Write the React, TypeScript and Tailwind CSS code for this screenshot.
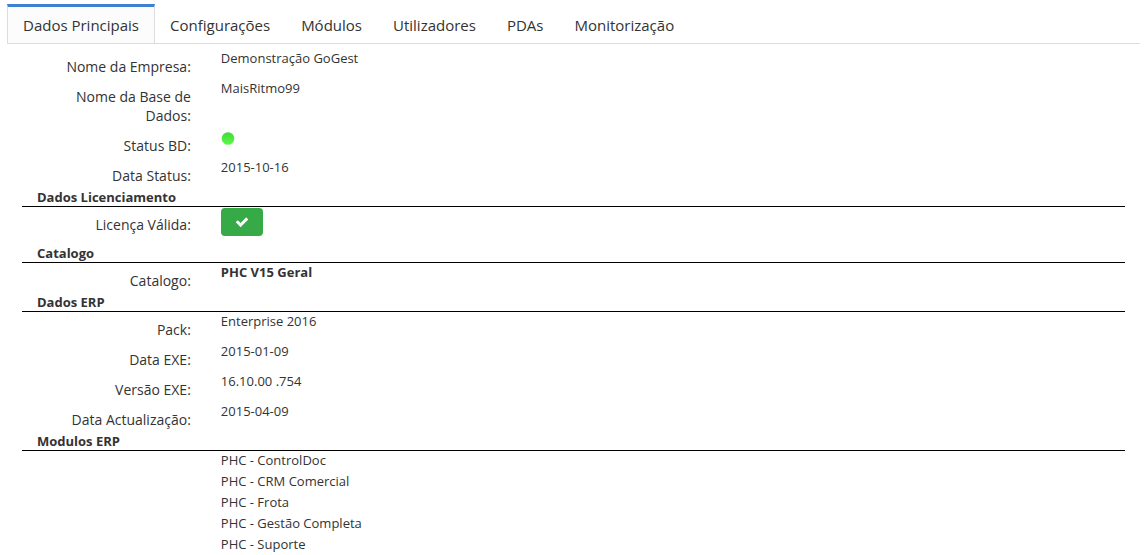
import type { ReactNode } from 'react';
import clsx from 'clsx';

const tabs = ['Dados Principais', 'Configurações', 'Módulos', 'Utilizadores', 'PDAs', 'Monitorização'];

const modulos = [
  'PHC - ControlDoc',
  'PHC - CRM Comercial',
  'PHC - Frota',
  'PHC - Gestão Completa',
  'PHC - Suporte',
];

const Row = ({ label, children }: { label: string; children: ReactNode }) => (
  <div className="grid grid-cols-6">
    <dt className="px-[15px] pt-2 pb-[3px] text-right text-sm leading-[19px]">{label}</dt>
    <dd className="col-span-5 px-[15px]">{children}</dd>
  </div>
);

const Section = ({ title, children }: { title: string; children: ReactNode }) => (
  <section>
    <h2 className="border-b border-black px-[15px] font-bold">{title}</h2>
    {children}
  </section>
);

const App = () => {
  return (
    <main className="bg-white pt-1 pr-1.5 pl-[7px] font-['Open_Sans',sans-serif] text-[13px] leading-[18px] text-[#333]">
      <nav className="flex -space-x-px border-b border-[#ddd]">
        {tabs.map((tab, index) => (
          <a
            key={tab}
            href="#"
            aria-current={index === 0 ? 'page' : undefined}
            className={clsx(
              'border-x border-t-3 px-[15px] py-2 text-[15px] leading-5',
              index === 0
                ? 'border-x-[#ddd] border-t-[#4080d0] bg-[#fcfcfc]'
                : 'border-transparent'
            )}
          >
            {tab}
          </a>
        ))}
      </nav>

      <div className="px-[15px] pt-[5px]">
        <dl>
          <Row label="Nome da Empresa:">Demonstração GoGest</Row>
          <Row label="Nome da Base de Dados:">MaisRitmo99</Row>
          <Row label="Status BD:">
            <svg className="mt-1" width="14" height="14" viewBox="0 0 14 14" role="img" aria-label="Online">
              <defs>
                <linearGradient id="status" x1="0" y1="0" x2="0" y2="1">
                  <stop offset="0" stopColor="#40d83a" />
                  <stop offset="1" stopColor="#5cfa44" />
                </linearGradient>
              </defs>
              <circle cx="7" cy="6.5" r="6.3" fill="url(#status)" />
            </svg>
          </Row>
          <Row label="Data Status:">2015-10-16</Row>
        </dl>

        <Section title="Dados Licenciamento">
          <dl className="pb-[7px]">
            <Row label="Licença Válida:">
              <button
                type="button"
                aria-label="Licença válida"
                className="mt-px flex h-7 w-[42px] items-center justify-center rounded bg-[#35aa47]"
              >
                <svg width="14" height="14" viewBox="0 0 1792 1792" fill="#fff">
                  <path d="M1671 566q0 40-28 68l-724 724-136 136q-28 28-68 28t-68-28l-136-136-362-362q-28-28-28-68t28-68l136-136q28-28 68-28t68 28l294 295 656-657q28-28 68-28t68 28l136 136q28 28 28 68z" />
                </svg>
              </button>
            </Row>
          </dl>
        </Section>

        <Section title="Catalogo">
          <dl>
            <Row label="Catalogo:">
              <b>PHC V15 Geral</b>
            </Row>
          </dl>
        </Section>

        <Section title="Dados ERP">
          <dl>
            <Row label="Pack:">Enterprise 2016</Row>
            <Row label="Data EXE:">2015-01-09</Row>
            <Row label="Versão EXE:">16.10.00 .754</Row>
            <Row label="Data Actualização:">2015-04-09</Row>
          </dl>
        </Section>

        <Section title="Modulos ERP">
          <div className="grid grid-cols-6">
            <ul className="col-span-5 col-start-2 flex flex-col gap-[3px] px-[15px]">
              {modulos.map((modulo) => (
                <li key={modulo}>{modulo}</li>
              ))}
            </ul>
          </div>
        </Section>
      </div>
    </main>
  );
};

export default App;
